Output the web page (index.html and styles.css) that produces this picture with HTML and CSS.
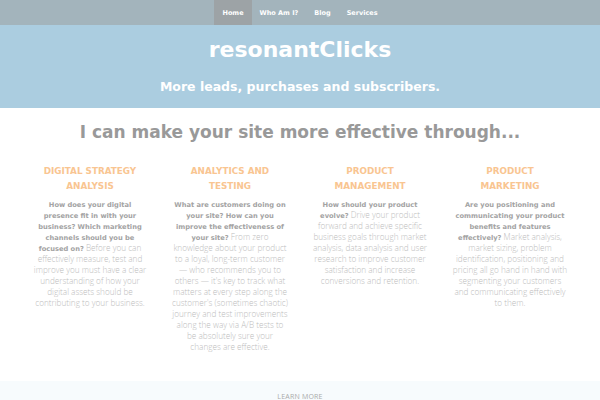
FILE: index.html
```html
<!DOCTYPE html>
<html>
<head>
<meta charset="utf-8">
<link rel="stylesheet" href="styles.css">
</head>
<body>
<nav class="nav">
  <a class="nav-item active">Home</a>
  <a class="nav-item">Who Am I?</a>
  <a class="nav-item">Blog</a>
  <a class="nav-item">Services</a>
</nav>
<header class="hero">
  <h1 class="title">resonantClicks</h1>
  <p class="tagline">More leads, purchases and subscribers.</p>
</header>
<main class="main">
  <h2 class="lead">I can make your site more effective through...</h2>
  <div class="cols">
    <section class="col">
      <h3 class="col-title">Digital Strategy Analysis</h3>
      <p class="col-text"><strong>How does your digital presence fit in with your business? Which marketing channels should you be focused on?</strong> Before you can effectively measure, test and improve you must have a clear understanding of how your digital assets should be contributing to your business.</p>
    </section>
    <section class="col">
      <h3 class="col-title">Analytics and Testing</h3>
      <p class="col-text"><strong>What are customers doing on your site? How can you improve the effectiveness of your site?</strong> From zero knowledge about your product to a loyal, long-term customer — who recommends you to others — it's key to track what matters at every step along the customer's (sometimes chaotic) journey and test improvements along the way via A/B tests to be absolutely sure your changes are effective.</p>
    </section>
    <section class="col">
      <h3 class="col-title">Product Management</h3>
      <p class="col-text"><strong>How should your product evolve?</strong> Drive your product forward and achieve specific business goals through market analysis, data analysis and user research to improve customer satisfaction and increase conversions and retention.</p>
    </section>
    <section class="col">
      <h3 class="col-title">Product Marketing</h3>
      <p class="col-text"><strong>Are you positioning and communicating your product benefits and features effectively?</strong> Market analysis, market sizing, problem identification, positioning and pricing all go hand in hand with segmenting your customers and communicating effectively to them.</p>
    </section>
  </div>
</main>
<footer class="more">
  <span class="more-link">LEARN MORE</span>
</footer>
</body>
</html>
```
FILE: styles.css
```css
html, body {
  margin: 0;
  padding: 0;
  background: #ffffff;
}
body {
  font-family: "DejaVu Sans", sans-serif;
  width: 600px;
  height: 400px;
  overflow: hidden;
  position: relative;
}
.nav {
  display: flex;
  justify-content: center;
  height: 25px;
  background: #a3b4bc;
}
.nav-item {
  display: flex;
  align-items: center;
  padding: 0 8px;
  color: #ffffff;
  font-weight: bold;
  font-size: 6.5px;
}
.nav-item.active {
  background: #9da3a6;
}
.hero {
  background: #abcde0;
  height: 83px;
  display: flex;
  flex-direction: column;
  align-items: center;
  color: #ffffff;
}
.title {
  margin: 11px 0 0;
  font-size: 22px;
  line-height: 28px;
  font-weight: bold;
}
.tagline {
  margin: 15px 0 0;
  font-size: 12.5px;
  line-height: 16px;
  font-weight: bold;
}
.main {
  padding: 0 20px;
}
.lead {
  margin: 11px 0 0;
  text-align: center;
  font-size: 17px;
  line-height: 26px;
  color: #999999;
  font-weight: bold;
}
.cols {
  display: grid;
  grid-template-columns: repeat(4, 1fr);
  margin-top: 19px;
}
.col {
  padding: 0 11px;
  text-align: center;
}
.col-title {
  margin: 0;
  padding: 0 9px;
  font-size: 8.8px;
  line-height: 15px;
  text-transform: uppercase;
  color: #f9c591;
  font-weight: bold;
}
.col-text {
  margin: 4px 0 0;
  font-family: "Open Sans", sans-serif;
  font-weight: 300;
  font-size: 8.2px;
  line-height: 11px;
  color: #bdbdbd;
}
.col-text strong {
  font-family: "DejaVu Sans", sans-serif;
  font-weight: bold;
  color: #a3a3a3;
  font-size: 6.7px;
  line-height: 1;
}
.more {
  position: absolute;
  left: 0;
  top: 381px;
  width: 600px;
  height: 40px;
  background: #f7fbfd;
  text-align: center;
}
.more-link {
  display: inline-block;
  margin-top: 11px;
  font-family: "Open Sans", sans-serif;
  font-size: 7px;
  color: #aaaaaa;
  letter-spacing: 0.2px;
}
```
